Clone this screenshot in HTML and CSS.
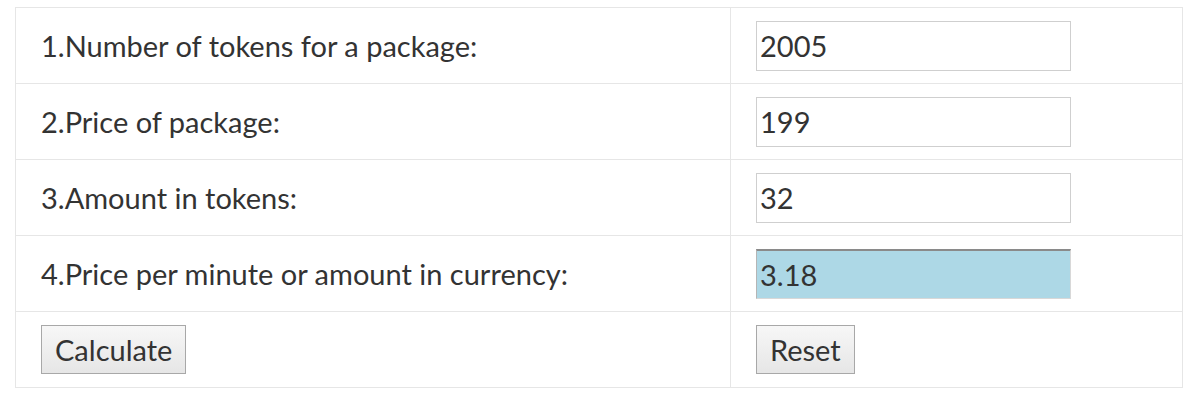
FILE: index.html
```html
<!DOCTYPE html>
<html>
<head>
<meta charset="utf-8">
<link rel="stylesheet" href="styles.css">
</head>
<body>
<div class="wrap">
<table class="calc">
  <tr>
    <td class="label">1.Number of tokens for a package:</td>
    <td class="field"><input class="inp" type="text" value="2005"></td>
  </tr>
  <tr>
    <td class="label">2.Price of package:</td>
    <td class="field"><input class="inp" type="text" value="199"></td>
  </tr>
  <tr>
    <td class="label">3.Amount in tokens:</td>
    <td class="field"><input class="inp" type="text" value="32"></td>
  </tr>
  <tr>
    <td class="label">4.Price per minute or amount in currency:</td>
    <td class="field"><input class="inp result" type="text" value="3.18"></td>
  </tr>
  <tr>
    <td class="label"><button class="btn" type="button">Calculate</button></td>
    <td class="field"><button class="btn" type="button">Reset</button></td>
  </tr>
</table>
</div>
</body>
</html>
```

FILE: styles.css
```css
html, body {
  margin: 0;
  padding: 0;
  background: #fff;
}
body {
  font-family: Lato, "Liberation Sans", sans-serif;
  color: #333;
}
.wrap {
  padding: 7px 17px 0 15px;
}
.calc {
  width: 1168px;
  border-collapse: collapse;
  font-size: 29px;
}
.calc td {
  border: 1px solid #e6e6e6;
  height: 76px;
  padding: 0 25px;
  vertical-align: middle;
  box-sizing: border-box;
}
.calc td.label {
  width: 715px;
  padding-left: 25px;
}
.inp {
  box-sizing: border-box;
  width: 315px;
  height: 50px;
  margin: 0;
  padding: 0 3px;
  border: 1px solid #cfcfcf;
  background: #fff;
  font-family: Lato, "Liberation Sans", sans-serif;
  font-size: 29px;
  color: #333;
  display: block;
}
.inp.result {
  background: #add8e6;
  border-top: 2px solid #8a8a8a;
  border-left: 1px solid #b5b5b5;
  border-right: 1px solid #d8d8d8;
  border-bottom: 1px solid #d8d8d8;
}
.btn {
  box-sizing: border-box;
  height: 49px;
  margin: 0;
  padding: 0 13px;
  border: 1px solid #a8a8a8;
  background: linear-gradient(#f7f7f7, #e6e6e6);
  font-family: Lato, "Liberation Sans", sans-serif;
  font-size: 29px;
  color: #333;
  display: block;
}
```
